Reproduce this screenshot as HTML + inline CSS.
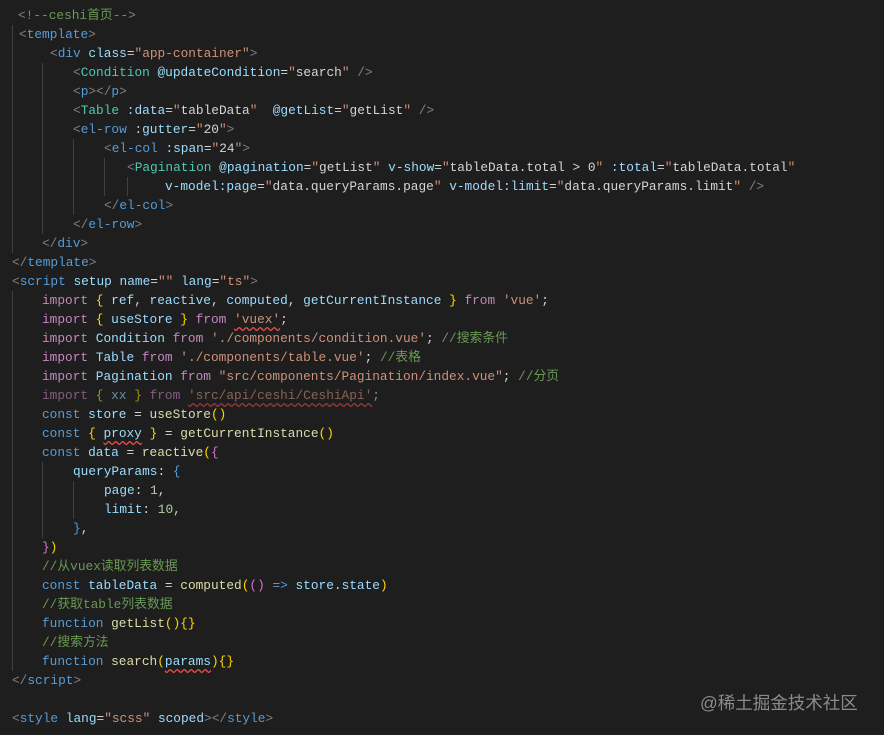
<!DOCTYPE html><html><head><meta charset="utf-8"><style>
body{margin:0;background:#1e1e1e;width:884px;height:735px;overflow:hidden;position:relative;font-family:"Liberation Mono","Noto Sans CJK SC",monospace;font-size:12.8px;}
.l{position:absolute;height:19px;line-height:19px;white-space:pre;color:#d4d4d4}
.g{position:absolute;width:1px;background:#404040}
.p{color:#808080}.t{color:#569cd6}.c{color:#4ec9b0}.a{color:#9cdcfe}.s{color:#ce9178}.cm{color:#6a9955}.k{color:#c586c0}.f{color:#dcdcaa}.b{color:#ffd700}.pp{color:#da70d6}.v{color:#9cdcfe}.n{color:#b5cea8}.cl{color:#4ec9b0}
.w{text-decoration:underline wavy #f14c4c;text-underline-offset:3px}
.wm{position:absolute;left:700px;top:690px;color:#8a8a8a;font-family:"Liberation Sans","Noto Sans CJK SC",sans-serif;font-size:17.5px}
</style></head><body>
<div class="g" style="left:12px;top:25px;height:228px"></div>
<div class="g" style="left:42px;top:63px;height:171px"></div>
<div class="g" style="left:73px;top:139px;height:76px"></div>
<div class="g" style="left:104px;top:158px;height:38px"></div>
<div class="g" style="left:127px;top:177px;height:19px"></div>
<div class="g" style="left:12px;top:291px;height:380px"></div>
<div class="g" style="left:42px;top:462px;height:76px"></div>
<div class="g" style="left:73px;top:481px;height:38px"></div>
<div class="l" style="left:18px;top:6px"><span class="p">&lt;!--</span><span class="cm">ceshi首页</span><span class="p">--&gt;</span></div>
<div class="l" style="left:19px;top:25px"><span class="p">&lt;</span><span class="t">template</span><span class="p">&gt;</span></div>
<div class="l" style="left:50px;top:44px"><span class="p">&lt;</span><span class="t">div</span> <span class="a">class</span>=<span class="s">"app-container"</span><span class="p">&gt;</span></div>
<div class="l" style="left:73px;top:63px"><span class="p">&lt;</span><span class="c">Condition</span> <span class="a">@updateCondition</span>=<span class="s">"</span>search<span class="s">"</span> <span class="p">/&gt;</span></div>
<div class="l" style="left:73px;top:82px"><span class="p">&lt;</span><span class="t">p</span><span class="p">&gt;&lt;/</span><span class="t">p</span><span class="p">&gt;</span></div>
<div class="l" style="left:73px;top:101px"><span class="p">&lt;</span><span class="c">Table</span> <span class="a">:data</span>=<span class="s">"</span>tableData<span class="s">"</span>  <span class="a">@getList</span>=<span class="s">"</span>getList<span class="s">"</span> <span class="p">/&gt;</span></div>
<div class="l" style="left:73px;top:120px"><span class="p">&lt;</span><span class="t">el-row</span> <span class="a">:gutter</span>=<span class="s">"</span>20<span class="s">"</span><span class="p">&gt;</span></div>
<div class="l" style="left:104px;top:139px"><span class="p">&lt;</span><span class="t">el-col</span> <span class="a">:span</span>=<span class="s">"</span>24<span class="s">"</span><span class="p">&gt;</span></div>
<div class="l" style="left:127px;top:158px"><span class="p">&lt;</span><span class="c">Pagination</span> <span class="a">@pagination</span>=<span class="s">"</span>getList<span class="s">"</span> <span class="a">v-show</span>=<span class="s">"</span>tableData.total &gt; 0<span class="s">"</span> <span class="a">:total</span>=<span class="s">"</span>tableData.total<span class="s">"</span></div>
<div class="l" style="left:165px;top:177px"><span class="a">v-model:page</span>=<span class="s">"</span>data.queryParams.page<span class="s">"</span> <span class="a">v-model:limit</span>=<span class="s">"</span>data.queryParams.limit<span class="s">"</span> <span class="p">/&gt;</span></div>
<div class="l" style="left:104px;top:196px"><span class="p">&lt;/</span><span class="t">el-col</span><span class="p">&gt;</span></div>
<div class="l" style="left:73px;top:215px"><span class="p">&lt;/</span><span class="t">el-row</span><span class="p">&gt;</span></div>
<div class="l" style="left:42px;top:234px"><span class="p">&lt;/</span><span class="t">div</span><span class="p">&gt;</span></div>
<div class="l" style="left:12px;top:253px"><span class="p">&lt;/</span><span class="t">template</span><span class="p">&gt;</span></div>
<div class="l" style="left:12px;top:272px"><span class="p">&lt;</span><span class="t">script</span> <span class="a">setup</span> <span class="a">name</span>=<span class="s">""</span> <span class="a">lang</span>=<span class="s">"ts"</span><span class="p">&gt;</span></div>
<div class="l" style="left:42px;top:291px"><span class="k">import</span> <span class="b">{</span> <span class="v">ref</span>, <span class="v">reactive</span>, <span class="v">computed</span>, <span class="v">getCurrentInstance</span> <span class="b">}</span> <span class="k">from</span> <span class="s">'vue'</span>;</div>
<div class="l" style="left:42px;top:310px"><span class="k">import</span> <span class="b">{</span> <span class="v">useStore</span> <span class="b">}</span> <span class="k">from</span> <span class="s w">'vuex'</span>;</div>
<div class="l" style="left:42px;top:329px"><span class="k">import</span> <span class="v">Condition</span> <span class="k">from</span> <span class="s">'./components/condition.vue'</span>; <span class="cm">//搜索条件</span></div>
<div class="l" style="left:42px;top:348px"><span class="k">import</span> <span class="v">Table</span> <span class="k">from</span> <span class="s">'./components/table.vue'</span>; <span class="cm">//表格</span></div>
<div class="l" style="left:42px;top:367px"><span class="k">import</span> <span class="v">Pagination</span> <span class="k">from</span> <span class="s">"src/components/Pagination/index.vue"</span>; <span class="cm">//分页</span></div>
<div class="l" style="left:42px;top:386px;opacity:.6"><span class="k">import</span> <span class="b">{</span> <span class="v">xx</span> <span class="b">}</span> <span class="k">from</span> <span class="s w">'src/api/ceshi/CeshiApi'</span>;</div>
<div class="l" style="left:42px;top:405px"><span class="t">const</span> <span class="a">store</span> = <span class="f">useStore</span><span class="b">()</span></div>
<div class="l" style="left:42px;top:424px"><span class="t">const</span> <span class="b">{</span> <span class="a w">proxy</span> <span class="b">}</span> = <span class="f">getCurrentInstance</span><span class="b">()</span></div>
<div class="l" style="left:42px;top:443px"><span class="t">const</span> <span class="a">data</span> = <span class="f">reactive</span><span class="b">(</span><span class="pp">{</span></div>
<div class="l" style="left:73px;top:462px"><span class="a">queryParams</span>: <span class="t">{</span></div>
<div class="l" style="left:104px;top:481px"><span class="a">page</span>: <span class="n">1</span>,</div>
<div class="l" style="left:104px;top:500px"><span class="a">limit</span>: <span class="n">10</span>,</div>
<div class="l" style="left:73px;top:519px"><span class="t">}</span>,</div>
<div class="l" style="left:42px;top:538px"><span class="pp">}</span><span class="b">)</span></div>
<div class="l" style="left:42px;top:557px"><span class="cm">//从vuex读取列表数据</span></div>
<div class="l" style="left:42px;top:576px"><span class="t">const</span> <span class="a">tableData</span> = <span class="f">computed</span><span class="b">(</span><span class="pp">()</span> <span class="t">=&gt;</span> <span class="a">store</span>.<span class="a">state</span><span class="b">)</span></div>
<div class="l" style="left:42px;top:595px"><span class="cm">//获取table列表数据</span></div>
<div class="l" style="left:42px;top:614px"><span class="t">function</span> <span class="f">getList</span><span class="b">(){}</span></div>
<div class="l" style="left:42px;top:633px"><span class="cm">//搜索方法</span></div>
<div class="l" style="left:42px;top:652px"><span class="t">function</span> <span class="f">search</span><span class="b">(</span><span class="a w">params</span><span class="b">){}</span></div>
<div class="l" style="left:12px;top:671px"><span class="p">&lt;/</span><span class="t">script</span><span class="p">&gt;</span></div>
<div class="l" style="left:12px;top:709px"><span class="p">&lt;</span><span class="t">style</span> <span class="a">lang</span>=<span class="s">"scss"</span> <span class="a">scoped</span><span class="p">&gt;&lt;/</span><span class="t">style</span><span class="p">&gt;</span></div>
<div class="wm">@稀土掘金技术社区</div>
</body></html>
